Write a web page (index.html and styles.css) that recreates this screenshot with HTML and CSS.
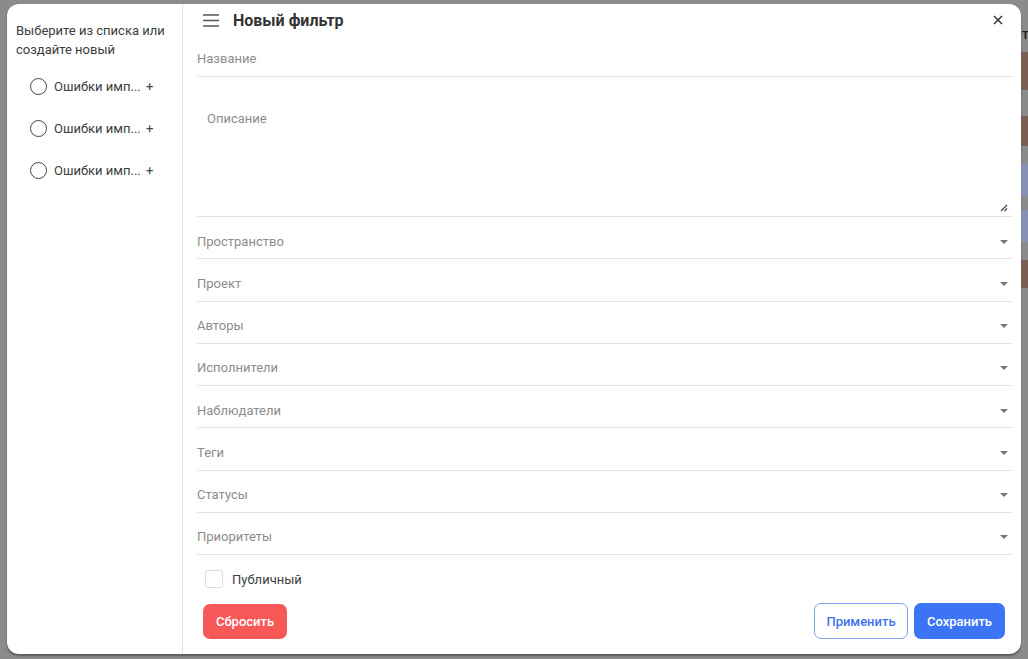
FILE: index.html
```html
<!DOCTYPE html>
<html lang="ru">
<head>
<meta charset="utf-8">
<link rel="stylesheet" href="styles.css">
</head>
<body>
<div class="page">
  <div class="modal">
    <aside class="sidebar">
      <p class="hint">Выберите из списка или создайте новый</p>
      <ul class="filters">
        <li class="filter"><span class="radio"></span><span class="fname">Ошибки имп...</span><span class="plus">+</span></li>
        <li class="filter"><span class="radio"></span><span class="fname">Ошибки имп...</span><span class="plus">+</span></li>
        <li class="filter"><span class="radio"></span><span class="fname">Ошибки имп...</span><span class="plus">+</span></li>
      </ul>
    </aside>
    <main class="main">
      <header class="head">
        <svg class="burger" width="16" height="13" viewBox="0 0 16 13"><path d="M0 1h16M0 6.5h16M0 12h16" stroke="#555" stroke-width="1.4"/></svg>
        <h1 class="title">Новый фильтр</h1>
        <svg class="close" width="10" height="10" viewBox="0 0 10 10"><path d="M1 1l8 8M9 1l-8 8" stroke="#333" stroke-width="1.5"/></svg>
      </header>
      <div class="field name">Название</div>
      <div class="textarea">
        <span class="ph">Описание</span>
        <svg class="resize" width="9" height="9" viewBox="0 0 9 9"><path d="M8 2L2 8M8 5.5L5.5 8" stroke="#444" stroke-width="1.2"/></svg>
      </div>
      <div class="select"><span>Пространство</span><i class="caret"></i></div>
      <div class="select"><span>Проект</span><i class="caret"></i></div>
      <div class="select"><span>Авторы</span><i class="caret"></i></div>
      <div class="select"><span>Исполнители</span><i class="caret"></i></div>
      <div class="select"><span>Наблюдатели</span><i class="caret"></i></div>
      <div class="select"><span>Теги</span><i class="caret"></i></div>
      <div class="select"><span>Статусы</span><i class="caret"></i></div>
      <div class="select"><span>Приоритеты</span><i class="caret"></i></div>
      <label class="check"><span class="box"></span><span>Публичный</span></label>
      <div class="actions">
        <button class="btn reset">Сбросить</button>
        <div class="right">
          <button class="btn apply">Применить</button>
          <button class="btn save">Сохранить</button>
        </div>
      </div>
    </main>
  </div>
  <div class="backdrop">
    <span class="bt">T</span>
    <span class="blk face"></span>
    <span class="blk face f2"></span>
    <span class="blk blue"></span>
    <span class="blk blue b2"></span>
    <span class="blk face f3"></span>
  </div>
</div>
</body>
</html>
```

FILE: styles.css
```css
* { box-sizing: border-box; }
html, body { margin: 0; padding: 0; }
body {
  background: #8b8b8b;
  font-family: "Roboto", "Inter", sans-serif;
  width: 1028px;
  height: 659px;
  overflow: hidden;
}
.page {
  display: flex;
  padding: 4px 0 0 7px;
  height: 659px;
}
.modal {
  width: 1014px;
  height: 650px;
  background: #fff;
  border-radius: 12px;
  display: flex;
  box-shadow: 0 2px 2px rgba(0,0,0,0.35);
  flex: none;
}
.sidebar {
  width: 176px;
  border-right: 1px solid #e6e6e6;
  padding: 17px 8px 0 9px;
  flex: none;
}
.hint {
  margin: 0;
  font-size: 13px;
  line-height: 19px;
  color: #3d3d3d;
}
.filters {
  list-style: none;
  margin: 6px 0 0;
  padding: 0 0 0 14px;
}
.filter {
  display: flex;
  align-items: center;
  height: 42px;
}
.radio {
  width: 17px;
  height: 17px;
  border: 1.5px solid #444;
  border-radius: 50%;
  flex: none;
}
.fname {
  margin-left: 7px;
  font-size: 13px;
  color: #3d3d3d;
  width: 92px;
  flex: none;
  white-space: nowrap;
}
.plus {
  font-size: 13px;
  color: #444;
}
.main {
  flex: 1;
  padding: 0 9px 0 14px;
  display: flex;
  flex-direction: column;
}
.head {
  display: flex;
  align-items: center;
  height: 32px;
  padding-left: 6px;
}
.burger { flex: none; }
.title {
  margin: 0 0 0 14px;
  font-size: 16px;
  font-weight: 700;
  color: #333;
  flex: 1;
}
.close { margin-right: 9px; }
.field, .select {
  font-size: 13px;
  color: #8c8c8c;
  border-bottom: 1px solid #e4e4e4;
}
.name {
  height: 41px;
  padding-top: 15px;
  line-height: 16px;
}
.textarea {
  position: relative;
  height: 140px;
  border-bottom: 1px solid #e4e4e4;
  padding: 34px 10px 0;
  font-size: 13px;
  color: #8c8c8c;
  line-height: 16px;
}
.resize {
  position: absolute;
  right: 4px;
  bottom: 4px;
}
.select {
  height: 42.25px;
  display: flex;
  align-items: center;
  justify-content: space-between;
  padding-top: 8px;
  line-height: 16px;
}
.caret {
  width: 0;
  height: 0;
  border-left: 4px solid transparent;
  border-right: 4px solid transparent;
  border-top: 4px solid #777;
  margin-right: 4px;
}
.check {
  display: flex;
  align-items: center;
  height: 48px;
  padding-left: 8px;
  font-size: 13px;
  color: #3d3d3d;
}
.box {
  width: 18px;
  height: 18px;
  border: 1px solid #dcdcdc;
  border-radius: 3px;
  margin-right: 9px;
}
.actions {
  display: flex;
  justify-content: space-between;
  align-items: center;
  padding: 0 7px 0 6px;
}
.right { display: flex; gap: 6px; }
.btn {
  font-family: inherit;
  font-size: 13px;
  font-weight: 500;
  height: 35px;
  border-radius: 7px;
  border: 1px solid transparent;
  padding: 0 11px;
  cursor: pointer;
}
.reset { background: #f75858; color: #fff; width: 84px; }
.apply { background: #fff; color: #3f72ee; border-color: #7fa2f2; width: 94px; height: 36px; }
.save { background: #3d74f6; color: #fff; width: 91px; height: 36px; }
.backdrop {
  flex: 1;
  display: flex;
  flex-direction: column;
  padding-top: 26px;
}
.bt {
  font-size: 11px;
  font-weight: 700;
  color: #222;
  line-height: 12px;
  margin-left: 1px;
}
.blk { display: block; width: 100%; }
.face { height: 38px; margin-top: 10px; background: #7a5e52; }
.f2 { height: 30px; margin-top: 26px; }
.blue { height: 32px; margin-top: 18px; background: #8690b4; }
.b2 { margin-top: 14px; }
.f3 { height: 28px; margin-top: 18px; }
```
